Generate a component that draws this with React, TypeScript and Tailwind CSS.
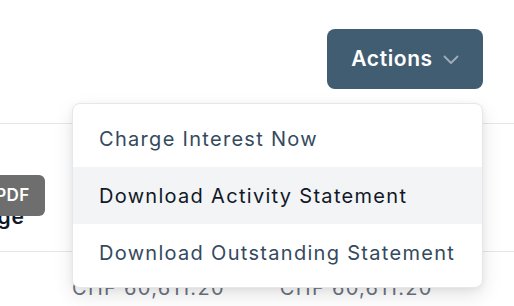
import React from "react";

export default function App() {
  const font = { fontFamily: "Inter, 'Noto Sans', sans-serif" };
  return (
    <div className="relative w-[514px] h-[306px] overflow-hidden bg-white" style={font}>
      {/* header */}
      <div className="flex justify-end pt-[29px] pr-[31px]">
        <button className="flex h-[60px] w-[156px] items-center justify-center gap-[10px] rounded-[8px] bg-[#405d72] text-[21px] font-semibold tracking-[0.6px] text-white">
          <span>Actions</span>
          <svg width="16" height="10" viewBox="0 0 16 10" fill="none" className="mt-[2px]">
            <path d="M1.5 1.5 L8 8 L14.5 1.5" stroke="#a3adb7" strokeWidth="1.8" strokeLinecap="round" strokeLinejoin="round" />
          </svg>
        </button>
      </div>

      {/* table behind */}
      <div className="mt-[34px] border-t border-[#e3e6ea]">
        <div className="flex h-[128px] items-center border-b border-[#e3e6ea]">
          <span className="ml-[-54px] mt-[58px] text-[21px] font-semibold tracking-[0.8px] text-[#111827]">Charge</span>
          <span className="ml-[48px] mt-[14px] text-[20px] text-[#111827]">.</span>
        </div>
        <div className="flex gap-[55px] pl-[72px] pt-[22px] text-[20px] leading-[28px] tracking-[1.3px] text-[#6b7280]">
          <span>CHF 60,611.20</span>
          <span>CHF 60,611.20</span>
        </div>
      </div>

      {/* PDF tooltip */}
      <div className="absolute left-[-20px] top-[175px] flex h-[41px] w-[65px] items-center justify-center rounded-[6px] bg-[#6e6e6e] text-[17px] font-semibold tracking-[0.5px] text-white">
        PDF
      </div>

      {/* dropdown menu */}
      <div className="absolute left-[72px] top-[103px] w-[411px] rounded-[8px] border border-[#e5e7eb] bg-white py-[6px] text-[20px] tracking-[1.3px] shadow-[0_8px_20px_rgba(0,0,0,0.10),0_2px_6px_rgba(0,0,0,0.06)]">
        <div className="flex h-[57px] items-center px-[26px] text-[#344a5e]">Charge Interest Now</div>
        <div className="flex h-[57px] items-center bg-[#f3f4f6] px-[26px] text-[#111827]">Download Activity Statement</div>
        <div className="flex h-[57px] items-center px-[26px] text-[#344a5e]">Download Outstanding Statement</div>
      </div>
    </div>
  );
}
